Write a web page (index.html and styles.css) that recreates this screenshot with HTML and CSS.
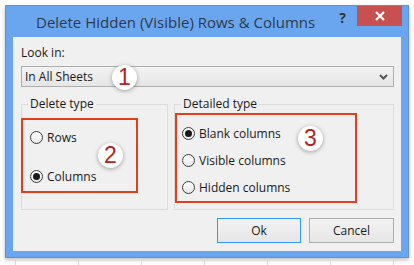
FILE: index.html
```html
<!DOCTYPE html>
<html lang="en">
<head>
  <meta charset="UTF-8">
  <title>Delete Hidden (Visible) Rows &amp; Columns</title>
  <link rel="stylesheet" href="styles.css">
</head>
<body>

<div class="window">
  <div class="titlebar">
    <span class="title">Delete Hidden (Visible) Rows &amp; Columns</span>
    <span class="help">?</span>
    <span class="close">
      <svg width="12" height="12" viewBox="0 0 12 12"><path d="M2 2 L10 10 M10 2 L2 10" stroke="#fff" stroke-width="2.2"/></svg>
    </span>
  </div>

  <div class="content">
    <div class="label">Look in:</div>
    <div class="select">
      <span>In All Sheets</span>
      <svg class="chevron" width="9" height="6" viewBox="0 0 9 6"><path d="M1 1 L4.5 4.5 L8 1" stroke="#555" stroke-width="2" fill="none"/></svg>
      <span class="badge badge-1">1</span>
    </div>

    <div class="groups">
      <fieldset class="group group-delete">
        <legend>Delete type</legend>
        <div class="mark mark-2">
          <div class="radio"><span class="dot"></span>Rows</div>
          <div class="radio"><span class="dot checked"></span>Columns</div>
          <span class="badge badge-2">2</span>
        </div>
      </fieldset>
      <fieldset class="group group-detail">
        <legend>Detailed type</legend>
        <div class="mark mark-3">
          <div class="radio"><span class="dot checked"></span>Blank columns</div>
          <div class="radio"><span class="dot"></span>Visible columns</div>
          <div class="radio"><span class="dot"></span>Hidden columns</div>
          <span class="badge badge-3">3</span>
        </div>
      </fieldset>
    </div>

    <div class="buttons">
      <button class="btn btn-ok">Ok</button>
      <button class="btn">Cancel</button>
    </div>
  </div>
</div>
<div class="sheet"></div>

</body>
</html>
```

FILE: styles.css
```css
body {
  margin: 0;
  background-color: #fff;
  font-family: "Open Sans", "Noto Sans", sans-serif;
  font-size: 12px;
  color: #1a1a1a;
  overflow: hidden;
}
.window {
  margin: 5px 5px 0 5px;
  width: 404px;
  height: 253px;
  box-sizing: border-box;
  background-color: #6aa6ef;
  border: 1px solid #5b92d8;
  box-shadow: 0 2px 4px rgba(0, 0, 0, 0.25);
}
.titlebar {
  height: 31px;
  display: flex;
  align-items: flex-start;
}
.title {
  padding-left: 30px;
  padding-top: 6px;
  font-size: 15px;
  color: #2e3a48;
  flex: 1;
}
.help {
  font-weight: bold;
  font-size: 14px;
  color: #333;
  padding-top: 2px;
  margin-right: 11px;
}
.close {
  width: 45px;
  height: 20px;
  margin-right: 6px;
  background-color: #c75050;
  display: flex;
  align-items: center;
  justify-content: center;
}
.content {
  margin: 0 7px;
  height: 214px;
  box-sizing: border-box;
  background-color: #f0f0f0;
  padding: 8px 7px 0 8px;
}
.label {
  line-height: 16px;
}
.select {
  position: relative;
  margin-top: 5px;
  height: 21px;
  box-sizing: border-box;
  border: 1px solid #adadad;
  background: linear-gradient(#f2f2f2, #e6e6e6);
  display: flex;
  align-items: center;
  padding-left: 3px;
}
.chevron {
  position: absolute;
  right: 5px;
  top: 7px;
}
.badge {
  position: absolute;
  width: 25px;
  height: 25px;
  border-radius: 50%;
  background-color: #fff;
  box-shadow: 0 1px 4px rgba(0, 0, 0, 0.35);
  color: #b3221c;
  font-family: "Liberation Sans", Arial, sans-serif;
  font-size: 23px;
  line-height: 25px;
  text-align: center;
}
.badge-1 {
  left: 90px;
  top: -2px;
}
.groups {
  display: flex;
  gap: 6px;
  margin-top: 9px;
  height: 114px;
}
.group {
  margin: 0;
  padding: 0;
  border: 1px solid #dcdcdc;
  box-sizing: border-box;
}
.group legend {
  margin-left: 6px;
  padding: 0 2px;
  line-height: 16px;
}
.group-delete {
  width: 147px;
}
.group-detail {
  width: 220px;
}
.mark {
  position: relative;
  border: 2px solid #e2401c;
  box-sizing: border-box;
}
.mark-2 {
  margin: 6px 0 0 -1px;
  width: 117px;
  height: 75px;
  padding: 9px 0 0 7px;
}
.mark-2 .radio + .radio {
  margin-top: 23px;
}
.mark-3 {
  margin: 1px 0 0 0;
  width: 182px;
  height: 90px;
  padding: 10px 0 0 5px;
}
.mark-3 .radio + .radio {
  margin-top: 11px;
}
.radio {
  display: flex;
  align-items: center;
  height: 16px;
  gap: 4px;
}
.dot {
  width: 13px;
  height: 13px;
  box-sizing: border-box;
  border-radius: 50%;
  border: 1px solid #3c3c3c;
  background: linear-gradient(#fff, #e8e8e8);
  display: flex;
  align-items: center;
  justify-content: center;
}
.dot.checked::after {
  content: "";
  width: 7px;
  height: 7px;
  border-radius: 50%;
  background-color: #1a1a1a;
}
.badge-2 {
  left: 75px;
  top: 23px;
}
.badge-3 {
  left: 121px;
  top: 11px;
}
.buttons {
  display: flex;
  justify-content: flex-end;
  gap: 8px;
  margin-top: 8px;
}
.btn {
  width: 85px;
  height: 25px;
  border: 1px solid #adadad;
  background: linear-gradient(#f2f2f2, #e6e6e6);
  font-family: inherit;
  font-size: 12px;
  color: #1a1a1a;
  padding: 0;
}
.btn-ok {
  width: 84px;
  border-color: #3399ff;
}
.sheet {
  height: 7px;
  background-image: linear-gradient(90deg, #d8d8d8 1px, transparent 1px);
  background-size: 63px 100%;
  background-position: 15px 0;
}
```
